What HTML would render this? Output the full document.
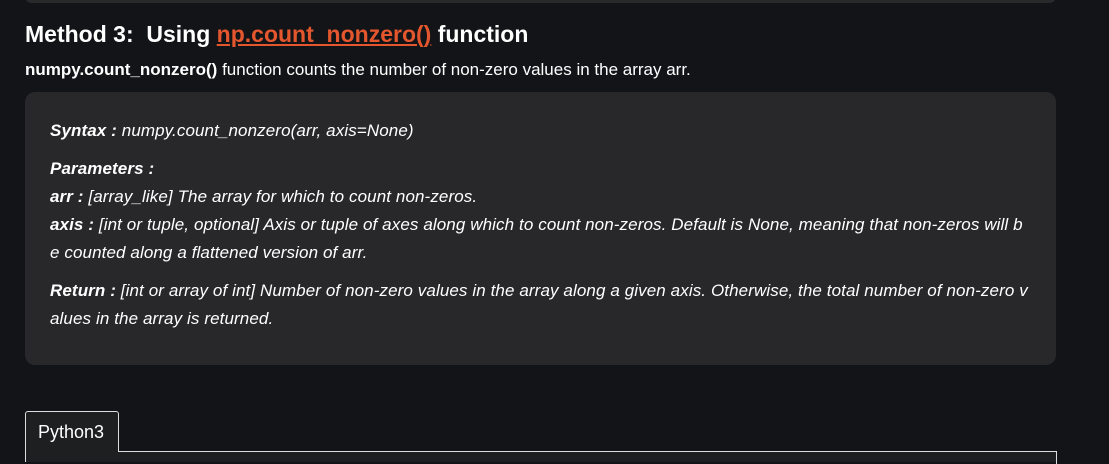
<!DOCTYPE html>
<html><head><style>
html,body{margin:0;padding:0;background:#131417;width:1109px;height:460px;overflow:hidden;font-family:"Liberation Sans",sans-serif;color:#fff}
.top{position:absolute;left:25px;top:-10px;width:1031px;height:13px;background:#28292b;border-radius:8px}
h2{position:absolute;left:25px;top:21px;margin:0;font-size:23px;font-weight:bold;letter-spacing:0;white-space:nowrap}
h2 a{color:#e4572e;text-decoration:underline}
.p{position:absolute;left:25px;top:60px;font-size:17px;letter-spacing:0;white-space:nowrap}
.box{position:absolute;left:25px;top:92px;width:1031px;height:273px;background:#28282b;border-radius:10px}
.l{position:absolute;left:50px;font-size:17px;font-style:italic;letter-spacing:0.1px;white-space:nowrap}
.tab{position:absolute;left:25px;top:411px;width:94px;height:41px;border:1px solid #ddd;border-bottom:none;border-radius:3px 3px 0 0;background:#1e1f21;font-size:18px;box-sizing:border-box;padding:10px 0 0 12px}
.line{position:absolute;left:118px;top:451px;width:938px;height:12px;border-top:1px solid #ddd;border-right:1px solid #ddd}
.inner{position:absolute;left:25px;top:452px;width:1031px;height:10px;background:#1e1f21;border-left:1px solid #ddd}
</style></head><body>
<div class="top"></div>
<h2>Method 3:&nbsp; Using <a>np.count_nonzero()</a> function</h2>
<div class="p"><b>numpy.count_nonzero()</b> function counts the number of non-zero values in the array arr.</div>
<div class="box"></div>
<div class="l" style="top:121px"><b>Syntax :</b> numpy.count_nonzero(arr, axis=None)</div>
<div class="l" style="top:159px"><b>Parameters :</b></div>
<div class="l" style="top:187px"><b>arr :</b> [array_like] The array for which to count non-zeros.</div>
<div class="l" style="top:215px"><b>axis :</b> [int or tuple, optional] Axis or tuple of axes along which to count non-zeros. Default is None, meaning that non-zeros will b</div>
<div class="l" style="top:243px">e counted along a flattened version of arr.</div>
<div class="l" style="top:281px"><b>Return :</b> [int or array of int] Number of non-zero values in the array along a given axis. Otherwise, the total number of non-zero v</div>
<div class="l" style="top:309px">alues in the array is returned.</div>
<div class="inner"></div>
<div class="line"></div>
<div class="tab">Python3</div>
</body></html>
